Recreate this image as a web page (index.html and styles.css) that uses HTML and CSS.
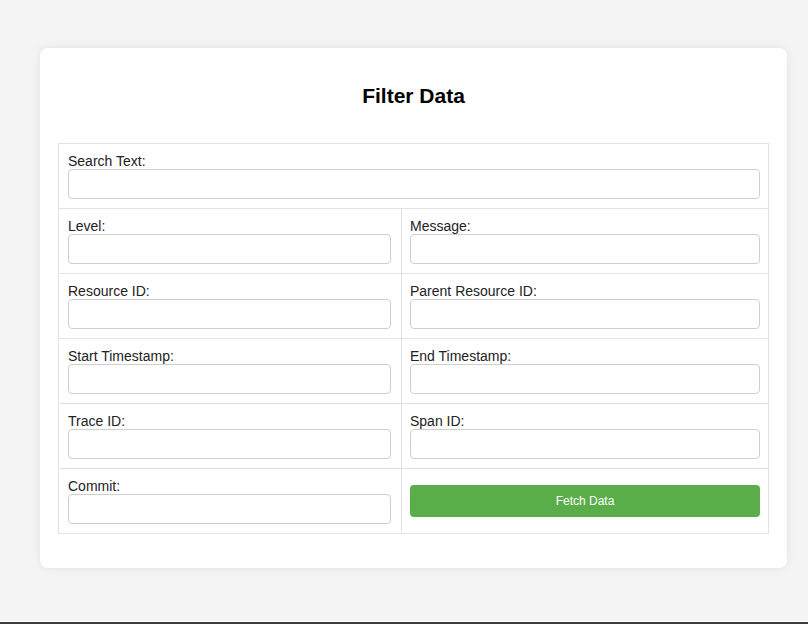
FILE: index.html
```html
<!DOCTYPE html>
<html lang="en">
<head>
<meta charset="utf-8">
<title>Filter Data</title>
<link rel="stylesheet" href="styles.css">
</head>
<body>
<div class="card">
  <h2 class="title">Filter Data</h2>
  <table class="filters">
    <colgroup><col class="col-left"><col class="col-right"></colgroup>
    <tr>
      <td class="full" colspan="2"><label class="lbl">Search Text:</label><input class="inp" type="text"></td>
    </tr>
    <tr>
      <td class="left"><label class="lbl">Level:</label><input class="inp" type="text"></td>
      <td class="right"><label class="lbl">Message:</label><input class="inp" type="text"></td>
    </tr>
    <tr>
      <td class="left"><label class="lbl">Resource ID:</label><input class="inp" type="text"></td>
      <td class="right"><label class="lbl">Parent Resource ID:</label><input class="inp" type="text"></td>
    </tr>
    <tr>
      <td class="left"><label class="lbl">Start Timestamp:</label><input class="inp" type="text"></td>
      <td class="right"><label class="lbl">End Timestamp:</label><input class="inp" type="text"></td>
    </tr>
    <tr>
      <td class="left"><label class="lbl">Trace ID:</label><input class="inp" type="text"></td>
      <td class="right"><label class="lbl">Span ID:</label><input class="inp" type="text"></td>
    </tr>
    <tr>
      <td class="left"><label class="lbl">Commit:</label><input class="inp" type="text"></td>
      <td class="right btn-cell"><button class="btn" type="button">Fetch Data</button></td>
    </tr>
  </table>
</div>
<div class="bottom-bar"></div>
</body>
</html>
```

FILE: styles.css
```css
html, body {
  margin: 0;
  padding: 0;
}
body {
  background: #f4f4f4;
  font-family: "Liberation Sans", Arial, sans-serif;
  color: #222;
  padding-top: 48px;
  min-height: 624px;
  box-sizing: border-box;
}
.card {
  width: 747px;
  margin-left: 40px;
  box-sizing: border-box;
  background: #fff;
  border-radius: 8px;
  box-shadow: 0 0 10px rgba(0, 0, 0, 0.08);
  padding: 34px 18px 34px 18px;
}
.title {
  margin: 0 0 33px;
  font-size: 21px;
  line-height: 28px;
  font-weight: bold;
  text-align: center;
  color: #000;
}
.filters {
  width: 100%;
  border-collapse: collapse;
  table-layout: fixed;
}
.col-left { width: 343px; }
.filters td {
  border: 1px solid #e2e2e2;
  padding: 9px 8px 9px 9px;
  vertical-align: top;
}
.filters td.left {
  padding-right: 10px;
}
.filters td.right {
  padding-left: 8px;
}
.lbl {
  display: block;
  font-size: 14px;
  line-height: 16px;
  color: #222;
}
.inp {
  display: block;
  box-sizing: border-box;
  width: 100%;
  height: 30px;
  margin: 0;
  border: 1px solid #cfcfcf;
  border-radius: 4px;
  padding: 0 8px;
  background: #fff;
  font-family: inherit;
  font-size: 12px;
}
.filters td.btn-cell {
  vertical-align: middle;
}
.btn {
  display: block;
  width: 100%;
  height: 32px;
  margin: 0;
  border: none;
  border-radius: 4px;
  background: #5aae4a;
  color: #fff;
  font-family: "Liberation Sans", Arial, sans-serif;
  font-size: 12px;
}
.bottom-bar {
  position: fixed;
  left: 0;
  right: 0;
  bottom: 0;
  height: 2px;
  border-top: 1px solid #fff;
  background: #3c3c3c;
}
```
